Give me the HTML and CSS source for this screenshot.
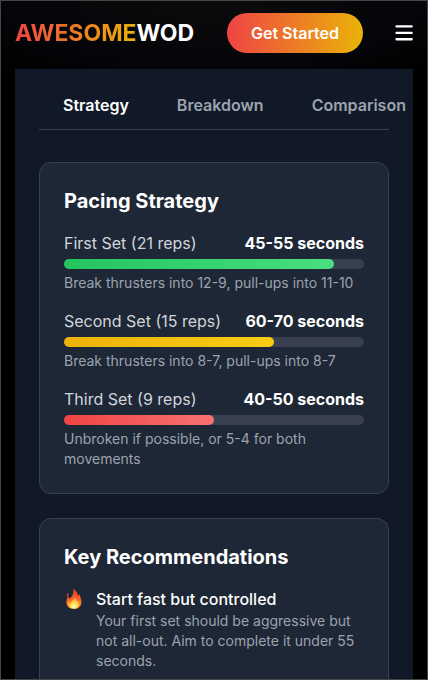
FILE: index.html
```html
<!DOCTYPE html>
<html lang="en">
<head>
<meta charset="utf-8">
<meta name="viewport" content="width=device-width, initial-scale=1">
<title>AwesomeWOD</title>
<link rel="stylesheet" href="styles.css">
</head>
<body>
<div class="screen">
  <header class="header">
    <a class="logo" href="#"><span class="logo-accent">AWESOME</span>WOD</a>
    <div class="header-actions">
      <button class="cta" type="button">Get Started</button>
      <button class="menu" type="button" aria-label="Menu">
        <svg width="18" height="16" viewBox="0 0 18 16" fill="none" stroke="#fff" stroke-width="2.4" stroke-linecap="round"><path d="M1.600 1.400h15M1.600 7.900h15M1.600 14.200h15"/></svg>
      </button>
    </div>
  </header>
  <main class="panel">
    <nav class="tabs">
      <button class="tab tab-active" type="button">Strategy</button>
      <button class="tab" type="button">Breakdown</button>
      <button class="tab" type="button">Comparison</button>
    </nav>
    <section class="card">
      <h2 class="card-title">Pacing Strategy</h2>
      <div class="sets">
        <div class="set">
          <div class="set-head"><span>First Set (21 reps)</span><strong class="set-time">45-55 seconds</strong></div>
          <div class="track"><div class="fill fill-green" style="width: 90%"></div></div>
          <p class="note">Break thrusters into 12-9, pull-ups into 11-10</p>
        </div>
        <div class="set">
          <div class="set-head"><span>Second Set (15 reps)</span><strong class="set-time">60-70 seconds</strong></div>
          <div class="track"><div class="fill fill-yellow" style="width: 70%"></div></div>
          <p class="note">Break thrusters into 8-7, pull-ups into 8-7</p>
        </div>
        <div class="set">
          <div class="set-head"><span>Third Set (9 reps)</span><strong class="set-time">40-50 seconds</strong></div>
          <div class="track"><div class="fill fill-red" style="width: 50%"></div></div>
          <p class="note">Unbroken if possible, or 5-4 for both movements</p>
        </div>
      </div>
    </section>
    <section class="card">
      <h2 class="card-title">Key Recommendations</h2>
      <ul class="tips">
        <li class="tip">
          <svg class="tip-icon" width="20" height="24" viewBox="0 0 20 24" aria-hidden="true">
            <defs>
              <linearGradient id="flame" x1="0" y1="0" x2="0" y2="1">
                <stop offset="0" stop-color="#e93a24"/><stop offset=".5" stop-color="#f9602a"/><stop offset="1" stop-color="#ffac30"/>
              </linearGradient>
              <radialGradient id="core" cx=".5" cy=".85" r=".75">
                <stop offset="0" stop-color="#fffbd0"/><stop offset=".4" stop-color="#ffe34a"/><stop offset="1" stop-color="#ff9a2c"/>
              </radialGradient>
            </defs>
            <path fill="url(#flame)" d="M9.2 2C12.4 3.5 14 6.2 13.9 9C14.5 8.6 14.9 7.7 14.9 6.8C16.2 8.2 16.3 9.8 16.8 11.4C18.9 17.2 15.4 22 10 22C4.600 22 1.400 17.600 2.600 13.200C3 11.700 3.800 10.900 4 9.600C4.900 10.200 5.400 11 5.600 12C7 10.300 7.800 9.600 8.600 7.800C9.600 5.800 9.600 4 9.200 2Z"/>
            <path fill="#e64a25" d="M4.600 6.200C2.600 6.700 2.300 8.500 3.200 10C4.200 9.100 4.700 7.700 4.600 6.200Z"/>
            <path fill="url(#core)" d="M11 9.600C11.500 12 12.800 13.300 13.300 14.800C14 14.400 14.300 13.800 14.400 13C16.300 17.400 14.400 21.500 10 21.500C5.600 21.500 3.900 18 5 14.400C5.700 15.100 6 15.800 6.300 16.500C7.200 14 10.400 13 11 9.600Z"/>
          </svg>
          <div>
            <h3 class="tip-title">Start fast but controlled</h3>
            <p class="tip-text">Your first set should be aggressive but not all-out. Aim to complete it under 55 seconds.</p>
          </div>
        </li>
      </ul>
    </section>
  </main>
</div>
</body>
</html>
```
FILE: styles.css
```css
* {
  box-sizing: border-box;
  margin: 0;
  padding: 0;
}

body {
  background: #000;
  color: #fff;
  font-family: Inter, "Liberation Sans", sans-serif;
  font-size: 16px;
  line-height: 24px;
}

button {
  border: 0;
  background: none;
  color: inherit;
  font: inherit;
  cursor: pointer;
}

.screen {
  display: flex;
  flex-direction: column;
  height: 100vh;
  overflow: hidden;
  border: 1px solid #464646;
}

.header {
  display: flex;
  flex: none;
  align-items: center;
  justify-content: space-between;
  padding: 12px 14px 16px;
  background: radial-gradient(ellipse at 50% 0, #0b0b0d, #040508 70%, #000);
}

.logo {
  color: #fff;
  font-size: 23px;
  font-weight: 700;
  line-height: 32px;
  text-decoration: none;
}

.logo-accent {
  background: linear-gradient(to right, #ef4444, #eab308);
  background-clip: text;
  -webkit-background-clip: text;
  color: transparent;
}

.header-actions {
  display: flex;
  align-items: center;
  gap: 32px;
}

.cta {
  padding: 8px 24px;
  border-radius: 20px;
  background: linear-gradient(to right, #ef4444, #eab308);
  font-weight: 600;
}

.menu svg {
  display: block;
}

.panel {
  display: flex;
  flex: none;
  flex-direction: column;
  gap: 24px;
  margin: 0 14px;
  padding: 12px 24px 24px;
  background: #111827;
}

.tabs {
  display: flex;
  margin-bottom: 8px;
  border-bottom: 1px solid #374151;
}

.tab {
  flex: none;
  padding: 12px 24px;
  color: #9ca3af;
  font-weight: 600;
}

.tab-active {
  color: #fff;
}

.card {
  padding: 24px;
  border: 1px solid #374151;
  border-radius: 12px;
  background: #1e2735;
}

.card-title {
  margin-bottom: 16px;
  font-size: 20px;
  font-weight: 700;
  line-height: 28px;
}

.sets {
  display: flex;
  flex-direction: column;
  gap: 16px;
}

.set-head {
  display: flex;
  justify-content: space-between;
  margin-bottom: 4px;
  color: #d1d5db;
}

.set-time {
  color: #fff;
  font-weight: 700;
}

.track {
  height: 10px;
  margin-bottom: 4px;
  border-radius: 5px;
  background: #394150;
}

.fill {
  height: 100%;
  border-radius: 5px;
}

.fill-green {
  background: linear-gradient(to right, #22c55e, #4ade80);
}

.fill-yellow {
  background: linear-gradient(to right, #eab308, #facc15);
}

.fill-red {
  background: linear-gradient(to right, #ef4444, #f87171);
}

.note,
.tip-text {
  color: #9ca3af;
  font-size: 14px;
  line-height: 20px;
}

.tips {
  list-style: none;
}

.tip {
  display: flex;
  gap: 12px;
}

.tip-icon {
  flex: none;
}

.tip-title {
  font-size: 16px;
  font-weight: 500;
}
```
